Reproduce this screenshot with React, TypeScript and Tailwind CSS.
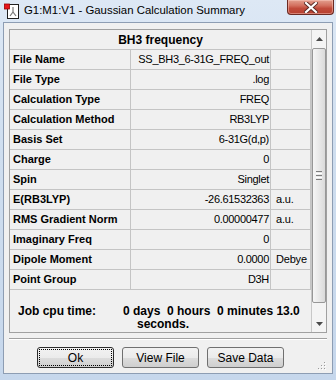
import React from "react";

const rows: [string, string, string][] = [
  ["File Name", "SS_BH3_6-31G_FREQ_out", ""],
  ["File Type", ".log", ""],
  ["Calculation Type", "FREQ", ""],
  ["Calculation Method", "RB3LYP", ""],
  ["Basis Set", "6-31G(d,p)", ""],
  ["Charge", "0", ""],
  ["Spin", "Singlet", ""],
  ["E(RB3LYP)", "-26.61532363", "a.u."],
  ["RMS Gradient Norm", "0.00000477", "a.u."],
  ["Imaginary Freq", "0", ""],
  ["Dipole Moment", "0.0000", "Debye"],
  ["Point Group", "D3H", ""],
];

function AppIcon() {
  return (
    <svg width="18" height="18" viewBox="0 0 18 18" className="mt-[2px] ml-[3px] shrink-0">
      <rect x="4.5" y="2.5" width="11" height="14" fill="#ffffff" stroke="#202020" />
      <line x1="10" y1="5" x2="10" y2="10" stroke="#7a7a7a" strokeWidth="1.2" />
      <line x1="10" y1="10" x2="7" y2="14" stroke="#7a7a7a" strokeWidth="1.2" />
      <line x1="10" y1="10" x2="13" y2="14" stroke="#7a7a7a" strokeWidth="1.2" />
      <rect x="1.5" y="2" width="5" height="5" fill="#e8141a" stroke="#9a0000" strokeWidth="0.8" />
    </svg>
  );
}

function CloseButton() {
  return (
    <div className="ml-auto mr-[2px] w-[47px] h-[15px] rounded-b-[4px] border border-t-0 border-[#6b2a22] bg-[linear-gradient(to_bottom,#e3a08f_0%,#d3705f_40%,#c14b3b_60%,#b6402f_100%)] flex items-center justify-center shadow-[inset_0_0_0_1px_rgba(255,210,200,0.45)]">
      <svg width="14" height="11" viewBox="0 0 14 11">
        <path d="M2 1 L12 10 M12 1 L2 10" stroke="#5a2a24" strokeWidth="4" strokeLinecap="square" />
        <path d="M2 1 L12 10 M12 1 L2 10" stroke="#ffffff" strokeWidth="2.2" strokeLinecap="square" />
      </svg>
    </div>
  );
}

function Arrow({ up }: { up: boolean }) {
  return (
    <svg width="7" height="4" viewBox="0 0 7 4">
      {up ? <path d="M0 4 L3.5 0 L7 4 Z" fill="#4a4a4a" /> : <path d="M0 0 L3.5 4 L7 0 Z" fill="#4a4a4a" />}
    </svg>
  );
}

function Scrollbar() {
  return (
    <div className="w-[15px] border-l border-[#c8c8c8] bg-[#f4f4f4] flex flex-col">
      <div className="h-[17px] flex items-center justify-center">
        <Arrow up />
      </div>
      <div className="mt-[1px] h-[255px] rounded-[2px] border border-[#979797] bg-[linear-gradient(to_right,#f6f6f6_0%,#eaeaea_45%,#dadada_100%)] flex items-center justify-center">
        <div className="flex flex-col gap-[1px]">
          <div className="w-[6px] h-[1px] bg-[#7d7d7d]" />
          <div className="w-[6px] h-[1px] bg-[#ffffff]" />
          <div className="w-[6px] h-[1px] bg-[#7d7d7d]" />
          <div className="w-[6px] h-[1px] bg-[#ffffff]" />
          <div className="w-[6px] h-[1px] bg-[#7d7d7d]" />
        </div>
      </div>
      <div className="flex-1" />
      <div className="h-[17px] flex items-center justify-center">
        <Arrow up={false} />
      </div>
    </div>
  );
}

function Button({ label, focused }: { label: string; focused?: boolean }) {
  return (
    <div
      className={
        "w-[77px] h-[21px] rounded-[3px] border bg-[linear-gradient(to_bottom,#f2f2f2_0%,#ebebeb_50%,#dddddd_51%,#cfcfcf_100%)] flex items-center justify-center text-[12px] leading-[14px] " +
        (focused ? "border-[#2b2b2b] p-[1px]" : "border-[#707070]")
      }
    >
      {focused ? (
        <div className="w-full h-full border border-dotted border-black flex items-center justify-center">{label}</div>
      ) : (
        label
      )}
    </div>
  );
}

export default function App() {
  return (
    <div className="w-[336px] h-[380px] overflow-hidden bg-[linear-gradient(to_bottom,#dde8f5_0%,#cfdeef_40%,#c6d7ec_100%)] flex flex-col font-['Liberation_Sans',Arial,sans-serif] text-black">
      <div className="h-[22px] flex items-start">
        <AppIcon />
        <span className="ml-[3px] mt-[3px] text-[11.4px] leading-[15px] text-[#000000] whitespace-nowrap">
          G1:M1:V1 - Gaussian Calculation Summary
        </span>
        <CloseButton />
      </div>

      <div className="relative ml-[3px] w-[330px] h-[352px] border border-[#8d9db3] bg-[#f0f0f0] flex flex-col">
        <div className="ml-[5px] mt-[6px] w-[318px] h-[304px] border border-[#a0a0a0] flex">
          <div className="w-[301px] flex flex-col">
            <div className="h-[20px] border-b border-[#c4c4c4] flex items-center justify-center text-[12px] font-bold">
              BH3 frequency
            </div>
            {rows.map(([k, v, u]) => (
              <div key={k} className="h-[20px] border-b border-[#c4c4c4] flex text-[11px] leading-[13px]">
                <div className="w-[121px] border-r border-[#c4c4c4] pl-[3px] flex items-center font-bold whitespace-nowrap">
                  {k}
                </div>
                <div className="w-[140px] border-r border-[#c4c4c4] pr-[1px] flex items-center justify-end whitespace-nowrap tracking-[-0.3px]">
                  {v}
                </div>
                <div className="w-[40px] border-r border-[#c4c4c4] pl-[5px] flex items-center whitespace-nowrap tracking-[-0.2px]">
                  {u}
                </div>
              </div>
            ))}
            <div className="flex-1 pt-[15px] pl-[8px] flex text-[12px] font-bold leading-[13px]">
              <div className="w-[105px]">Job cpu time:</div>
              <div className="whitespace-pre">
                <div>0 days  0 hours  0 minutes 13.0</div>
                <div className="pl-[14px]">seconds.</div>
              </div>
            </div>
          </div>
          <Scrollbar />
        </div>

        <div className="ml-[5px] mt-[5px] w-[318px] h-[2px] border-t border-[#a0a0a0] border-b border-b-white" />

        <div className="mt-[7px] ml-[33px] flex gap-[8px]">
          <Button label="Ok" focused />
          <Button label="View File" />
          <Button label="Save Data" />
        </div>

        <svg width="8" height="8" viewBox="0 0 8 8" className="absolute right-[6px] bottom-[3px]">
          {[
            [6, 0],
            [6, 3],
            [3, 3],
            [6, 6],
            [3, 6],
            [0, 6],
          ].map(([x, y], i) => (
            <g key={i}>
              <rect x={x + 1} y={y + 1} width="1" height="1" fill="#ffffff" />
              <rect x={x} y={y} width="1" height="1" fill="#9a9a9a" />
            </g>
          ))}
        </svg>
      </div>
    </div>
  );
}
